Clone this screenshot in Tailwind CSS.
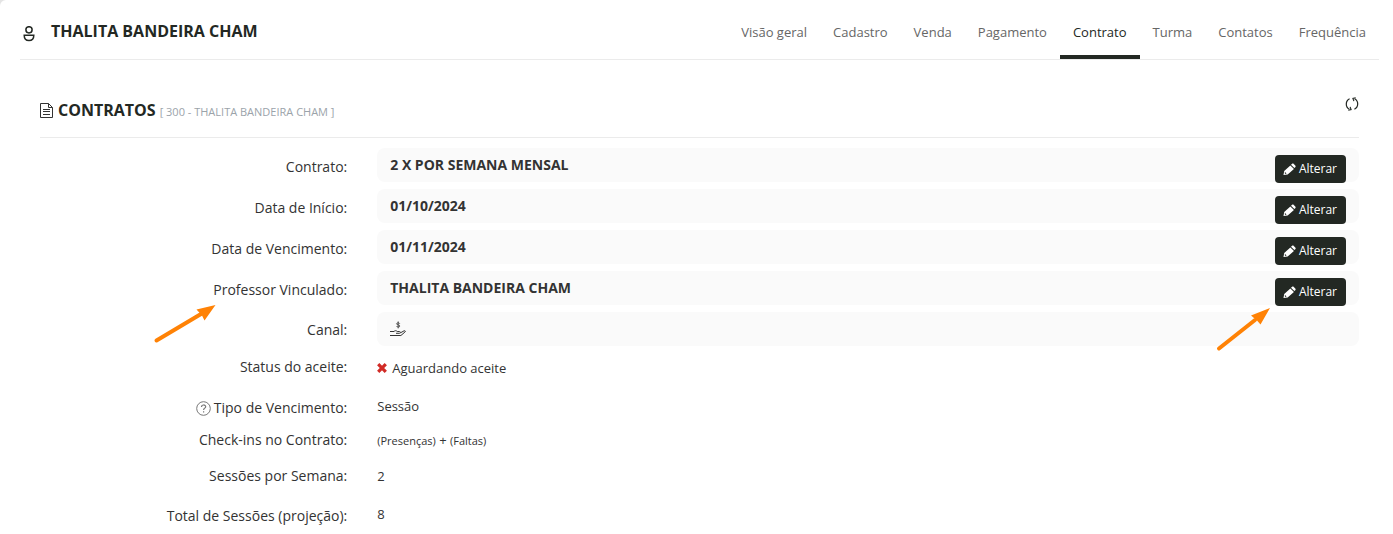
<!DOCTYPE html>
<html lang="pt-BR">
<head>
    <meta charset="UTF-8">
    <meta name="viewport" content="width=device-width, initial-scale=1.0">
    <title>Contrato - Thalita Bandeira Cham</title>
    <script src="https://cdn.jsdelivr.net/npm/@tailwindcss/browser@4"></script>
</head>
<body class="bg-[#e4e4e4] font-['Open_Sans',sans-serif] text-[#333]">
    <svg class="hidden">
        <symbol id="pencil" viewBox="0 0 14 14">
            <path fill="currentColor" d="M0.5 13l0.8-4.400 6.600-6 3.900 3.900-6.800 5.900zM8.600 1.900l1-0.900c0.700-0.600 1.400-0.600 2 0l1.600 1.700c0.600 0.600 0.600 1.300 0 1.900l-0.900 0.900z"/>
            <path fill="#232823" d="M2.200 9.800l1.600 1.600-1.100 0.400-0.900-0.900z"/>
        </symbol>
    </svg>

    <main class="relative min-h-screen bg-white rounded-tl-md pl-5 pr-3.5">
        <header class="flex justify-between border-b border-[#ebebeb] h-[60px]">
            <div class="flex items-center pt-0.5">
                <svg class="w-4 h-4 ml-px mt-1.5 mr-3.5" viewBox="0 0 16 16" fill="none" stroke="#232823" stroke-width="1.5">
                    <circle cx="8" cy="3.8" r="3.1"/>
                    <path d="M3.200 9.300h9.600c0 3.200-1.800 5.300-4.800 5.300s-4.800-2.100-4.800-5.300z"/>
                </svg>
                <h1 class="text-base font-bold text-[#232823]">THALITA BANDEIRA CHAM</h1>
            </div>
            <nav class="flex text-[13px] leading-5 text-[#666]">
                <a href="#" class="px-[13px] pt-[22px]">Visão geral</a>
                <a href="#" class="px-[13px] pt-[22px]">Cadastro</a>
                <a href="#" class="px-[13px] pt-[22px]">Venda</a>
                <a href="#" class="px-[13px] pt-[22px]">Pagamento</a>
                <a href="#" class="px-[13px] pt-[22px] border-b-4 border-[#232823] text-[#232823]">Contrato</a>
                <a href="#" class="px-[13px] pt-[22px]">Turma</a>
                <a href="#" class="px-[13px] pt-[22px]">Contatos</a>
                <a href="#" class="px-[13px] pt-[22px]">Frequência</a>
            </nav>
        </header>

        <section class="px-5 pt-8">
            <div class="flex justify-between border-b border-[#ebebeb] h-[46px]">
                <div class="flex items-center h-9">
                    <svg class="w-[13px] h-[15px] mr-[5px]" viewBox="0 0 13 15" fill="none" stroke="#333" stroke-width="1">
                        <path d="M0.500 0.500h8l4 4v10h-12zM8.500 0.500v4h4M3 6.500h7M3 8.500h7M3 11.500h7"/>
                    </svg>
                    <h2 class="text-base font-bold text-[#232823]">CONTRATOS</h2>
                    <small class="text-[11px] text-[#9ba3aa] ml-1 mt-1">[ 300 - THALITA BANDEIRA CHAM ]</small>
                </div>
                <button type="button" class="self-start mt-[5px]" aria-label="Atualizar">
                    <svg class="w-3.5 h-3.5" viewBox="0 0 14 14" fill="none" stroke="#232823" stroke-width="1.2">
                        <path d="M4.600 1.700A5.900 5.900 0 0 0 4.400 12.200M9.400 12.300A5.900 5.900 0 0 0 9.600 1.800"/>
                        <path d="M3.300 13.200l2.800-.6-1-2.700M10.700.8l-2.800.6 1 2.700" stroke-width="1.100"/>
                    </svg>
                </button>
            </div>

            <dl class="-mx-[15px] pt-2.5 text-sm leading-5">
                <div class="flex mb-[7px]">
                    <dt class="w-1/4 px-[15px] pt-[9px] text-right">Contrato:</dt>
                    <dd class="w-3/4 px-[15px]">
                        <div class="flex justify-between h-[34px] bg-[#fafafa] rounded-lg px-[13px]">
                            <b class="font-bold pt-[7px]">2 X POR SEMANA MENSAL</b>
                            <button type="button" class="flex items-center gap-[3px] h-7 mt-[7px] px-2 pr-[9px] rounded-[4px] bg-[#232823] text-white text-xs"><svg class="w-[13px] h-[13px]"><use href="#pencil"/></svg>Alterar</button>
                        </div>
                    </dd>
                </div>
                <div class="flex mb-[7px]">
                    <dt class="w-1/4 px-[15px] pt-[9px] text-right">Data de Início:</dt>
                    <dd class="w-3/4 px-[15px]">
                        <div class="flex justify-between h-[34px] bg-[#fafafa] rounded-lg px-[13px]">
                            <b class="font-bold pt-[7px]">01/10/2024</b>
                            <button type="button" class="flex items-center gap-[3px] h-7 mt-[7px] px-2 pr-[9px] rounded-[4px] bg-[#232823] text-white text-xs"><svg class="w-[13px] h-[13px]"><use href="#pencil"/></svg>Alterar</button>
                        </div>
                    </dd>
                </div>
                <div class="flex mb-[7px]">
                    <dt class="w-1/4 px-[15px] pt-[9px] text-right">Data de Vencimento:</dt>
                    <dd class="w-3/4 px-[15px]">
                        <div class="flex justify-between h-[34px] bg-[#fafafa] rounded-lg px-[13px]">
                            <b class="font-bold pt-[7px]">01/11/2024</b>
                            <button type="button" class="flex items-center gap-[3px] h-7 mt-[7px] px-2 pr-[9px] rounded-[4px] bg-[#232823] text-white text-xs"><svg class="w-[13px] h-[13px]"><use href="#pencil"/></svg>Alterar</button>
                        </div>
                    </dd>
                </div>
                <div class="flex mb-[7px]">
                    <dt class="relative w-1/4 px-[15px] pt-[9px] text-right">
                        Professor Vinculado:
                        <svg class="absolute right-[146px] top-8 w-[64px] h-[42px]" viewBox="0 0 64 42">
                            <path d="M4.500 37.500L49 11" stroke="#ff8205" stroke-width="4" stroke-linecap="round"/>
                            <path d="M63.500 2L52.500 17.500 50 12.500 44.500 6.500z" fill="#ff8205"/>
                        </svg>
                    </dt>
                    <dd class="relative w-3/4 px-[15px]">
                        <div class="flex justify-between h-[34px] bg-[#fafafa] rounded-lg px-[13px]">
                            <b class="font-bold pt-[7px]">THALITA BANDEIRA CHAM</b>
                            <button type="button" class="flex items-center gap-[3px] h-7 mt-[7px] px-2 pr-[9px] rounded-[4px] bg-[#232823] text-white text-xs"><svg class="w-[13px] h-[13px]"><use href="#pencil"/></svg>Alterar</button>
                        </div>
                        <svg class="absolute right-[104px] top-9 w-[56px] h-[46px]" viewBox="0 0 56 46">
                            <path d="M5 41.500L41 13" stroke="#ff8205" stroke-width="4" stroke-linecap="round"/>
                            <path d="M56 1L46.500 17.500 43 13.500 37 8.500z" fill="#ff8205"/>
                        </svg>
                    </dd>
                </div>
                <div class="flex mb-[11px]">
                    <dt class="w-1/4 px-[15px] pt-2 text-right">Canal:</dt>
                    <dd class="w-3/4 px-[15px]">
                        <div class="flex items-center h-[34px] bg-[#fafafa] rounded-lg px-[13px]">
                            <svg class="w-4 h-4" viewBox="0 0 16 16" fill="none" stroke="#333">
                                <path d="M9.800 2.700c-.3-1.200-3.300-1.200-3.300.2 0 1.300 3.400.7 3.400 2.100 0 1.400-3.200 1.300-3.500.1M8.200.4v7" stroke-width=".8"/>
                                <path d="M0 10.500h4c1-1.100 2.200-1 3.200 0h2.300c1.200 0 1.200 1.800 0 1.800H6M10.500 11.800l3.600-2c1.200-.3 1.700.6.800 1.300l-4 3.400H0"/>
                            </svg>
                        </div>
                    </dd>
                </div>
                <div class="flex mb-5">
                    <dt class="w-1/4 px-[15px] text-right">Status do aceite:</dt>
                    <dd class="flex items-center w-3/4 px-[15px] pt-px text-[13px]">
                        <svg class="w-2.5 h-2.5 mr-[5px]" viewBox="0 0 10 10" stroke="#d12b26" stroke-width="3.200"><path d="M1.200 1.200l7.600 7.600M8.800 1.200L1.200 8.800"/></svg>
                        Aguardando aceite
                    </dd>
                </div>
                <div class="flex items-start mb-3">
                    <dt class="flex items-center justify-end w-1/4 px-[15px]">
                        <svg class="w-[15px] h-[15px] mr-[3px]" viewBox="0 0 15 15" fill="none" stroke="#777">
                            <circle cx="7.500" cy="7.500" r="6.800"/>
                            <path d="M5.500 6c0-2.700 4.200-2.600 4.200-.3 0 1.400-2.100 1.500-2.100 3.200M7.600 10.200v1.300" stroke-width="1.200"/>
                        </svg>
                        Tipo de Vencimento:
                    </dt>
                    <dd class="w-3/4 px-[15px] text-[13px] leading-4">Sessão</dd>
                </div>
                <div class="flex items-start mb-[15px]">
                    <dt class="w-1/4 px-[15px] text-right">Check-ins no Contrato:</dt>
                    <dd class="w-3/4 px-[15px] text-[13px]"><small class="text-[11px]">(Presenças)</small> + <small class="text-[11px]">(Faltas)</small></dd>
                </div>
                <div class="flex items-start mb-5">
                    <dt class="w-1/4 px-[15px] text-right">Sessões por Semana:</dt>
                    <dd class="w-3/4 px-[15px] text-[13px]">2</dd>
                </div>
                <div class="flex items-start">
                    <dt class="w-1/4 px-[15px] text-right">Total de Sessões (projeção):</dt>
                    <dd class="w-3/4 px-[15px] text-[13px] leading-4">8</dd>
                </div>
            </dl>
        </section>
    </main>
</body>
</html>
